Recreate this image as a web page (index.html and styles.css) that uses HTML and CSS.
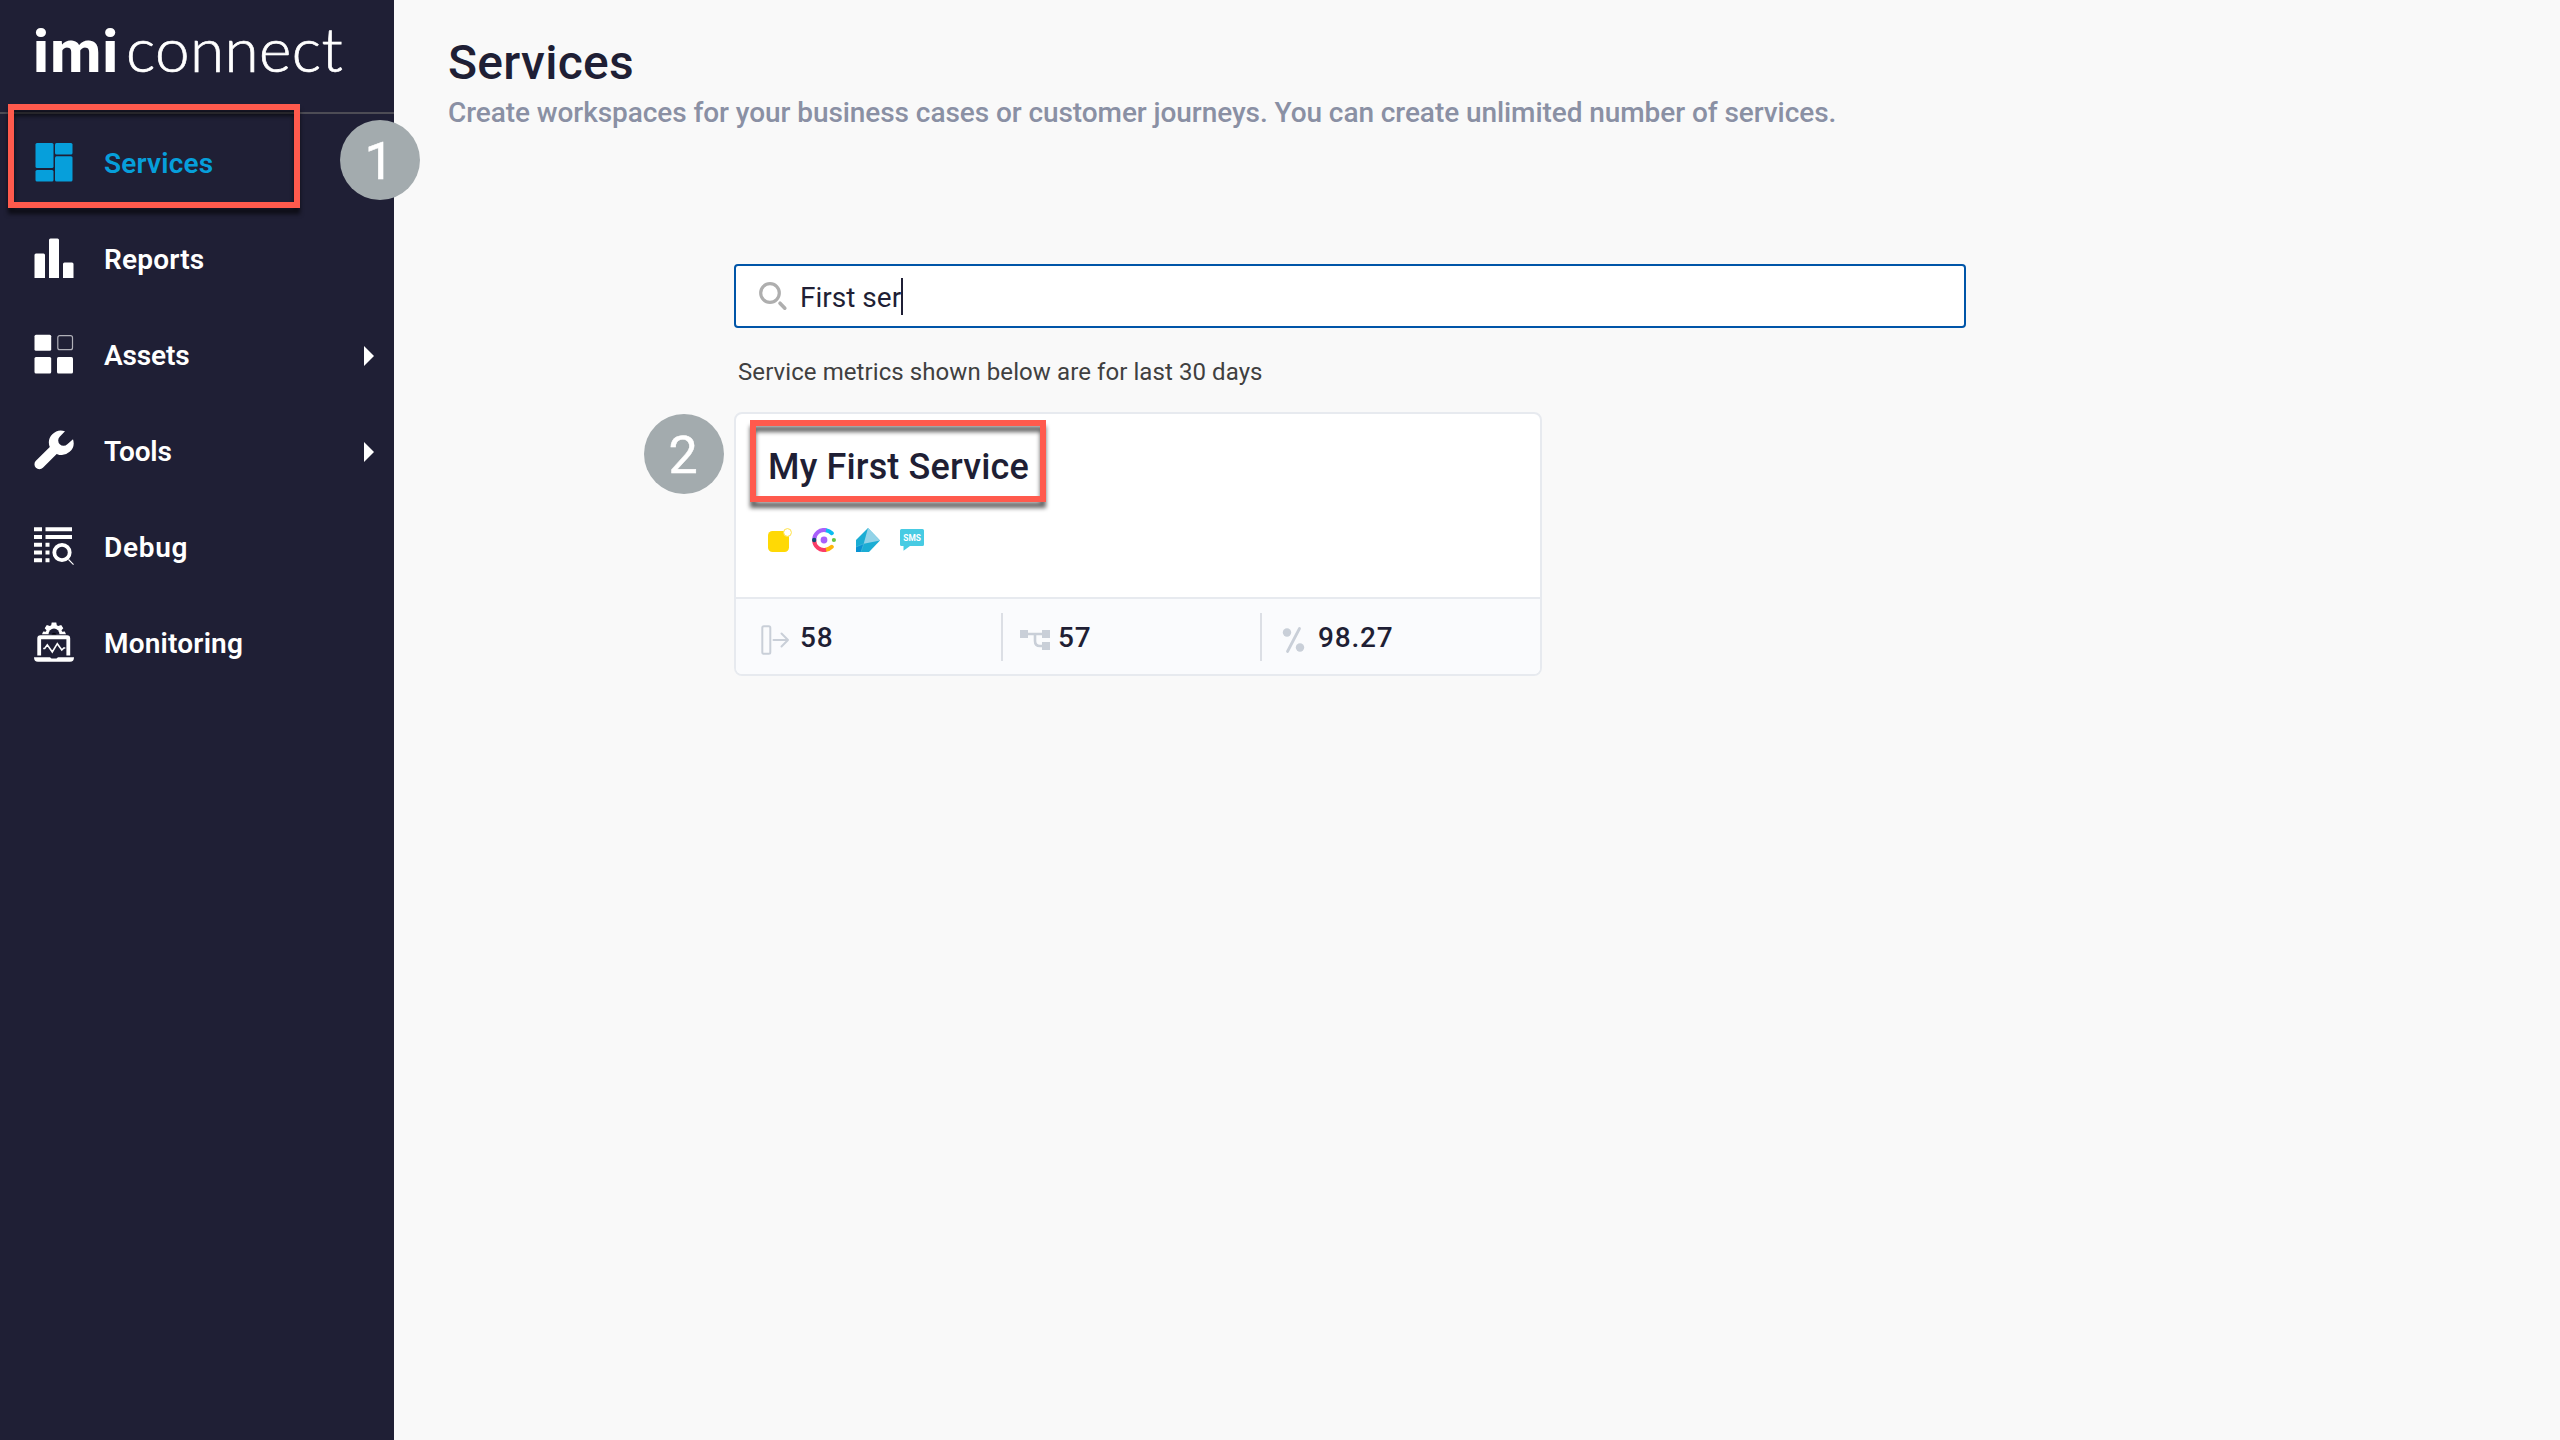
FILE: index.html
```
<!DOCTYPE html>
<html lang="en">
<head>
<meta charset="utf-8">
<title>Services - imiconnect</title>
<link rel="stylesheet" href="styles.css">
</head>
<body>
<div class="app">
  <aside class="sidebar">
    <div class="logo"><span class="logo-bold">imi</span><span class="logo-light">connect</span></div>
    <nav class="nav">
      <a class="nav-item active">
        <svg class="nav-icon" width="40" height="40" viewBox="0 0 40 40" fill="currentColor"><rect x="1.5" y="1" width="18" height="25" rx="1.5"/><rect x="1.5" y="28" width="18" height="11.5" rx="1.5"/><rect x="21" y="1" width="17.5" height="11.5" rx="1.5"/><rect x="21" y="14.3" width="17.5" height="25.2" rx="1.5"/></svg>
        <span class="nav-label">Services</span>
      </a>
      <a class="nav-item">
        <svg class="nav-icon" width="40" height="40" viewBox="0 0 40 40" fill="currentColor"><path d="M.5 40V17q0-1.500 1.500-1.500H9.500q1.500 0 1.500 1.500V40zM15 40V2q0-1.500 1.500-1.500h7Q25 .5 25 2V40zM29 40V26q0-1.500 1.500-1.500H38q1.500 0 1.500 1.500V40z"/></svg>
        <span class="nav-label">Reports</span>
      </a>
      <a class="nav-item">
        <svg class="nav-icon" width="40" height="40" viewBox="0 0 40 40" fill="currentColor"><rect x=".5" y=".8" width="16.700" height="16" rx="1.500"/><rect x=".5" y="23" width="16.700" height="16.500" rx="1.500"/><rect x="23" y="23" width="16" height="16.500" rx="1.500"/><rect x="23.800" y="1.700" width="14.700" height="14" rx="2" fill="none" stroke="currentColor" stroke-opacity=".65" stroke-width="1.200"/></svg>
        <span class="nav-label tight">Assets</span>
        <span class="nav-caret"></span>
      </a>
      <a class="nav-item">
        <svg class="nav-icon" width="40" height="40" viewBox="0 0 40 40" fill="currentColor"><path d="M31 1.300A12 12 0 0 0 15.800 17L1.900 30.800A4.900 4.900 0 0 0 8.900 37.800L22.700 23.900A12 12 0 0 0 39 9.200L33.300 14.200A5.200 5.200 0 0 1 25.700 6.800z"/></svg>
        <span class="nav-label tight">Tools</span>
        <span class="nav-caret"></span>
      </a>
      <a class="nav-item">
        <svg class="nav-icon" width="40" height="40" viewBox="0 0 40 40" fill="currentColor"><path d="M0 1.200h8v4H0zM11.500 1.200H38v4H11.500zM0 9h8v4H0zM11.500 9H38v4H11.500zM0 16.800h8v4H0zM11.500 16.800h4v4h-4zM0 24.500h8v4H0zM11.500 24.500h4v4h-4zM0 32.200h8v4H0zM11.500 32.200h4v4h-4z"/><circle cx="28" cy="26.500" r="7.700" fill="none" stroke="currentColor" stroke-width="3.800"/><path d="M34.500 33.500l5 5.200" stroke="currentColor" stroke-width="1.100"/></svg>
        <span class="nav-label wide">Debug</span>
      </a>
      <a class="nav-item">
        <svg class="nav-icon" width="40" height="40" viewBox="0 0 40 40" fill="currentColor"><path d="M8 12.200l1.200-2.600 2.600.2.700-1.600-1.800-2L12.800 3l3 1 1.400-.8.500-2.700h4.600l.5 2.700 1.400.8 3-1L29.300 6.200l-1.800 2 .7 1.600 2.600-.2L32 12.200z"/><path d="M14.500 12.500a5.500 6 0 0 1 11 0z" fill="#1f1f35"/><path d="M17.500 12.500a2.700 2.700 0 0 1 5 0z" fill="#05050d"/><path d="M3.300 33.500V16.500q0-3.200 3.200-3.200h26.500q3.200 0 3.200 3.200v17h-3.800V17.200H7.100v16.300z"/><path d="M9.200 26.500h1.500l2.600-3.700 5 7.200 5-8.300 4.500 6.300 2-2h1.500" fill="none" stroke="currentColor" stroke-width="1.600"/><path d="M0 35.300h16l1.500 1.200h5l1.500-1.200h16q0 4.500-4 4.500H4q-4 0-4-4.500z"/></svg>
        <span class="nav-label">Monitoring</span>
      </a>
    </nav>
  </aside>

  <main class="main">
    <header class="page-head">
      <h1 class="page-title">Services</h1>
      <p class="page-sub">Create workspaces for your business cases or customer journeys. You can create unlimited number of services.</p>
    </header>
    <section class="content">
      <div class="search">
        <svg class="search-icon" width="30" height="30" viewBox="0 0 30 30" fill="none" stroke="#aeaeae"><circle cx="12" cy="12" r="9.300" stroke-width="3.200"/><path d="M22 22.200l4.800 5" stroke-width="3.600" stroke-linecap="round"/></svg>
        <span class="search-text">First ser</span><span class="caret"></span>
      </div>
      <p class="note">Service metrics shown below are for last 30 days</p>
      <article class="card">
        <div class="card-body">
          <h2 class="card-title">My First Service</h2>
          <div class="channels">
            <svg width="24" height="24" viewBox="0 0 24 24"><rect x="0" y="3" width="21" height="21" rx="4.500" fill="#ffd905"/><circle cx="19.500" cy="4.500" r="3.900" fill="#fff" stroke="#ffe145" stroke-width="1"/></svg>
            <svg width="24" height="24" viewBox="0 0 24 24" fill="none" stroke-width="4" stroke-linecap="round"><path d="M14 2.200q3.300.6 5.800 3" stroke="#0bbcf2"/><path d="M14 21.800q3.300-.6 5.800-3" stroke="#ffb60a"/><path d="M2.200 12A9.800 9.800 0 0 1 14 2.200" stroke="#a960fb" stroke-linecap="butt"/><path d="M2.200 12A9.800 9.800 0 0 0 14 21.800" stroke="#fb3c68" stroke-linecap="butt"/><circle cx="2.200" cy="12" r="2.200" fill="#104a76"/><circle cx="12" cy="12" r="3.400" fill="#a960fb"/><circle cx="21.900" cy="12" r="2.100" fill="#6ac441"/></svg>
            <svg width="24" height="24" viewBox="0 0 24 24"><path d="M0 12L12 0l12 12.500L13 24H0z" fill="#1badd4"/><path d="M12 0l12 12.500-16.300 3.300z" fill="#93d3e8"/><path d="M0 19l7.700-3.200L5 24H0z" fill="#0a93d3"/><path d="M0 19l7.700-3.200L5 24" fill="none" stroke="#5cc3df" stroke-width=".5"/></svg>
            <svg width="24" height="24" viewBox="0 0 24 24"><path d="M1.500 1h21Q24 1 24 2.500v14q0 1.500-1.500 1.500H10l-6.500 4.700V18h-2Q0 18 0 16.500v-14Q0 1 1.500 1z" fill="#47cbe3"/><text x="3.300" y="12.500" textLength="17.600" lengthAdjust="spacingAndGlyphs" class="sms">SMS</text></svg>
          </div>
        </div>
        <footer class="metrics">
          <div class="metric">
            <svg class="m1" width="30" height="30" viewBox="0 0 30 30" fill="none" stroke="#c9cfd8" stroke-width="2"><rect x="1.300" y="1.300" width="8" height="27.500" rx="1.500"/><path d="M12.500 15H27M20.500 8.500L27 15l-6.500 6.500" stroke-linejoin="round" stroke-linecap="round"/></svg>
            <span>58</span>
          </div>
          <div class="metric">
            <svg class="m2" width="30" height="22" viewBox="0 0 30 22" fill="#c9cfd8"><rect width="8" height="8" y="1"/><rect x="22" width="8" height="8" y="1"/><rect x="22" y="13" width="8" height="8"/><path d="M8 5h14M15 5v7q0 5 5 5h2" fill="none" stroke="#c9cfd8" stroke-width="2.600"/></svg>
            <span>57</span>
          </div>
          <div class="metric">
            <svg class="m3" width="24" height="28" viewBox="0 0 24 28" fill="#c9cfd8"><circle cx="5" cy="6.500" r="4.200"/><circle cx="18" cy="21.500" r="4.200"/><path d="M17.500 2.500L5.500 25.500" stroke="#c9cfd8" stroke-width="2.800" stroke-linecap="round"/></svg>
            <span>98.27</span>
          </div>
        </footer>
      </article>
    </section>
  </main>
  <div class="callout callout-nav"></div>
  <div class="callout callout-card"></div>
  <div class="step step-1">1</div>
  <div class="step step-2">2</div>
</div>
</body>
</html>
```
FILE: styles.css
```
* { box-sizing: border-box; }
body {
  margin: 0;
  font-family: Roboto, "Liberation Sans", sans-serif;
  font-size: 28px;
  color: #1f1f35;
  background: #f9f9f9;
}
h1, h2, p { margin: 0; }
svg { display: block; flex: none; }

.app {
  position: relative;
  display: flex;
  width: 2560px;
  height: 1440px;
  overflow: hidden;
}

/* Sidebar */
.sidebar {
  flex: none;
  width: 394px;
  background: #1f1f35;
  color: #fff;
}
.logo {
  display: flex;
  align-items: baseline;
  height: 114px;
  padding: 8px 0 0 33px;
  border-bottom: 2px solid #4d4c55;
  line-height: 80px;
  white-space: nowrap;
}
.logo-bold {
  width: 93px;
  font-size: 59px;
  font-weight: 800;
  letter-spacing: 1.2px;
}
.logo-light {
  font-family: Lato, sans-serif;
  font-size: 62px;
  font-weight: 300;
  letter-spacing: 0.4px;
  -webkit-text-stroke: 0.7px #fff;
}
.nav { display: flex; flex-direction: column; }
.nav-item {
  display: flex;
  align-items: center;
  height: 96px;
  padding: 0 20px 0 34px;
}
.nav-item.active { color: #069fdb; }
.nav-label {
  padding: 3px 0 0 30px;
  font-weight: 600;
  letter-spacing: 0.2px;
}
.nav-label.wide { letter-spacing: 0.7px; }
.nav-label.tight { letter-spacing: -0.15px; }
.nav-caret {
  margin: 4px 0 0 auto;
  border: 10px solid transparent;
  border-left-color: #fff;
  border-right-width: 0;
}

/* Page heading */
.main { flex: 1; padding: 35px 0 0 54px; }
.page-title {
  font-size: 48px;
  font-weight: 500;
  line-height: 56px;
  letter-spacing: 0.3px;
}
.page-sub {
  margin-top: 2px;
  font-weight: 500;
  line-height: 40px;
  letter-spacing: -0.07px;
  color: #8a90a4;
}

/* Search and results */
.content {
  width: 1232px;
  margin: 131px 0 0 286px;
}
.search {
  display: flex;
  align-items: center;
  height: 64px;
  padding-left: 22px;
  background: #fff;
  border: 2px solid #0055a8;
  border-radius: 4px;
}
.search-text { padding: 3px 0 0 12px; }
.caret { width: 2px; height: 37px; background: #1f1f35; }
.note {
  margin: 28px 0 24px 4px;
  font-size: 24px;
  line-height: 32px;
  letter-spacing: 0.08px;
  color: #404040;
}
.card {
  display: flex;
  flex-direction: column;
  width: 808px;
  height: 264px;
  background: #fff;
  border: 2px solid #e7eaef;
  border-radius: 8px;
  overflow: hidden;
}
.card-body { flex: 1; padding: 29px 32px 0; }
.card-title {
  font-size: 36px;
  font-weight: 500;
  line-height: 48px;
  letter-spacing: 0.15px;
}
.channels { display: flex; gap: 20px; margin-top: 37px; }
.sms { font-size: 9px; font-weight: 700; fill: #fff; }
.metrics {
  display: flex;
  align-items: center;
  height: 77px;
  background: #fafbfd;
  border-top: 2px solid #e7eaef;
}
.metric {
  display: flex;
  align-items: center;
  width: 259px;
  height: 48px;
  border-right: 2px solid #dcdfe5;
  font-weight: 500;
  letter-spacing: 0.8px;
}
.metric span { padding-top: 2px; }
.metric:first-child { width: 267px; }
.metric:last-child { flex: 1; border: 0; }
.m1 { margin: 7px 9px 0 25px; }
.m2 { margin: 7px 8px 0 17px; }
.m3 { margin: 7px 12px 0 20px; }

/* Numbered annotations over the page */
.callout {
  position: absolute;
  border: 6px solid #ff5a4d;
  filter: drop-shadow(0 6px 2px rgba(0, 0, 0, 0.6));
}
.callout-nav { left: 8px; top: 104px; width: 292px; height: 104px; }
.callout-card { left: 750px; top: 420px; width: 296px; height: 82px; }
.step {
  position: absolute;
  width: 80px;
  height: 80px;
  padding: 2px 2px 0 0;
  border-radius: 50%;
  background: #a3abae;
  color: #fff;
  font-size: 52px;
  font-weight: 400;
  -webkit-text-stroke: 0.5px #fff;
  line-height: 80px;
  text-align: center;
}
.step-1 { left: 340px; top: 120px; }
.step-2 { left: 644px; top: 414px; }
```
